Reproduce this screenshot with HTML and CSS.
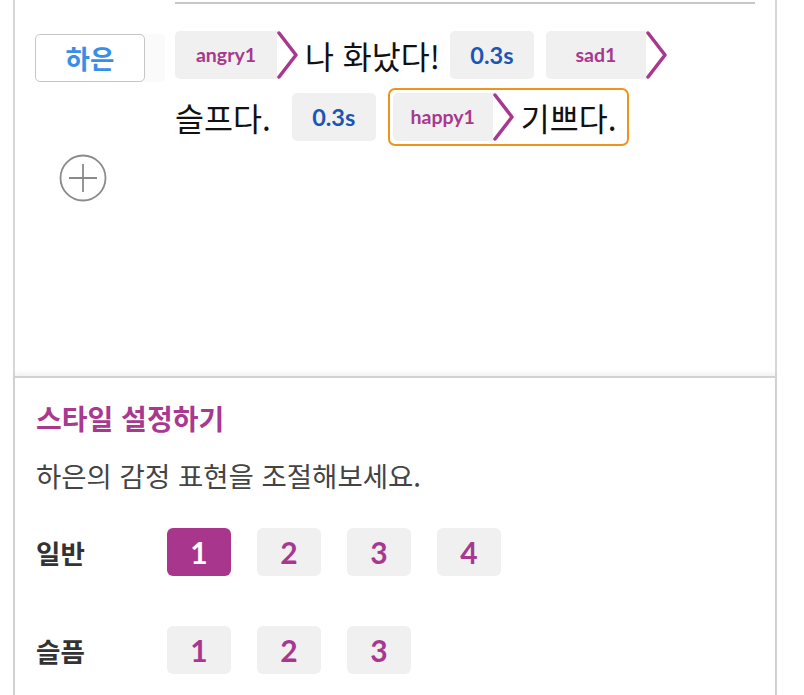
FILE: index.html
```html
<!DOCTYPE html>
<html lang="ko">
<head>
  <meta charset="UTF-8" />
  <meta name="viewport" content="width=device-width, initial-scale=1.0" />
  <title>대본 편집</title>
  <link rel="stylesheet" href="styles.css">
</head>
<body>
  <div class="panel">
    <div class="script-area">
      <div class="speaker-col">
        <div class="speaker-wrap">
          <div class="speaker">하은</div>
        </div>
        <button class="add-btn" type="button" aria-label="추가">
          <svg width="48" height="48" viewBox="0 0 48 48">
            <circle cx="24" cy="24" r="22.5" fill="none" stroke="#8a8a8a" stroke-width="1.8" />
            <path d="M10 24 H38 M24 10 V38" stroke="#8a8a8a" stroke-width="1.8" />
          </svg>
        </button>
      </div>

      <div class="lines">
        <span class="tag">
          <span class="tag-label">angry1</span>
          <svg class="chev" width="22" height="48" viewBox="0 0 22 48"><path d="M2 2 L19 24 L2 46" /></svg>
        </span>
        <span class="words">나 화났다!</span>
        <span class="pause">0.3s</span>
        <span class="tag">
          <span class="tag-label tag-short">sad1</span>
          <svg class="chev" width="22" height="48" viewBox="0 0 22 48"><path d="M2 2 L19 24 L2 46" /></svg>
        </span>
        <span class="words words-end">슬프다.</span>
        <span class="pause">0.3s</span>
        <span class="selected">
          <span class="tag">
            <span class="tag-label tag-short">happy1</span>
            <svg class="chev" width="22" height="48" viewBox="0 0 22 48"><path d="M2 2 L19 24 L2 46" /></svg>
          </span>
          <span class="words">기쁘다.</span>
        </span>
      </div>
    </div>

    <div class="style-area">
      <h3>스타일 설정하기</h3>
      <p class="hint">하은의 감정 표현을 조절해보세요.</p>

      <div class="style-row">
        <span class="style-name">일반</span>
        <div class="levels">
          <button class="level active" type="button">1</button>
          <button class="level" type="button">2</button>
          <button class="level" type="button">3</button>
          <button class="level" type="button">4</button>
        </div>
      </div>

      <div class="style-row">
        <span class="style-name">슬픔</span>
        <div class="levels">
          <button class="level" type="button">1</button>
          <button class="level" type="button">2</button>
          <button class="level" type="button">3</button>
        </div>
      </div>
    </div>
  </div>
</body>
</html>
```

FILE: styles.css
```css
body {
  margin: 0;
  background-color: white;
  font-family: "Noto Sans CJK KR", "Noto Sans", sans-serif;
  color: #111;
}
.panel {
  margin-left: 13px;
  width: 760px;
  border-left: 2px solid #d6d6d6;
  border-right: 2px solid #d6d6d6;
}
.script-area {
  display: flex;
  height: 376px;
  padding: 0 20px;
}
.speaker-col {
  width: 130px;
  padding-top: 34px;
}
.speaker-wrap {
  background-color: #fafafa;
  border-radius: 4px;
  height: 48px;
}
.speaker {
  width: 108px;
  height: 46px;
  border: 1px solid #c6c6c6;
  border-radius: 5px;
  background-color: white;
  color: #3a8ee8;
  font-size: 26.5px;
  font-weight: bold;
  line-height: 46px;
  text-align: center;
}
.add-btn {
  display: block;
  margin: 72px 0 0 24px;
  padding: 0;
  width: 48px;
  height: 48px;
  border: none;
  background: none;
  cursor: pointer;
}
.lines {
  flex: 1;
  margin: 2px 0 0 10px;
  padding-top: 27px;
  border-top: 2px solid #c8c8c8;
  display: flex;
  flex-wrap: wrap;
  align-content: flex-start;
  align-items: center;
  row-gap: 9px;
  word-break: keep-all;
}
.tag {
  display: inline-flex;
  height: 48px;
  margin-right: 6px;
}
.tag-label {
  width: 102px;
  background-color: #f0f0f0;
  border-radius: 5px 0 0 5px;
  color: #a8388f;
  font-family: Lato, sans-serif;
  font-weight: bold;
  font-size: 19.5px;
  line-height: 48px;
  text-align: center;
}
.tag-short {
  width: 100px;
}
.chev path {
  fill: none;
  stroke: #a8388f;
  stroke-width: 3.5;
  stroke-linecap: round;
  stroke-linejoin: round;
}
.words {
  font-size: 31.5px;
  line-height: 48px;
  white-space: nowrap;
}
.words-end {
  padding-right: 11px;
}
.pause {
  width: 84px;
  height: 48px;
  margin: 0 12px 0 10px;
  background-color: #f0f0f0;
  border-radius: 5px;
  color: #1c56b5;
  font-family: Lato, sans-serif;
  font-weight: bold;
  font-size: 23.5px;
  line-height: 48px;
  text-align: center;
}
.selected {
  display: flex;
  align-items: center;
  padding: 3px 11px 3px 3px;
  border: 2px solid #ef9319;
  border-radius: 7px;
}
.style-area {
  border-top: 2px solid #d2d2d2;
  box-shadow: 0 -3px 5px rgba(0, 0, 0, 0.06);
  padding: 22px 21px 30px;
}
h3 {
  margin: 0;
  color: #a9398f;
  font-size: 28px;
  line-height: 36px;
}
.hint {
  margin: 21px 0 0;
  color: #444;
  font-size: 27.5px;
  line-height: 36px;
}
.style-row {
  display: flex;
  align-items: center;
  margin-top: 35px;
}
.style-row + .style-row {
  margin-top: 50px;
}
.style-name {
  width: 131px;
  color: #333;
  font-size: 26.5px;
  font-weight: bold;
}
.levels {
  display: flex;
  gap: 26px;
}
.level {
  width: 64px;
  height: 48px;
  border: none;
  border-radius: 6px;
  background-color: #f0f0f0;
  color: #a8388f;
  font-family: Lato, sans-serif;
  font-weight: bold;
  font-size: 30px;
  cursor: pointer;
}
.level.active {
  background-color: #a8368c;
  color: white;
}
```
